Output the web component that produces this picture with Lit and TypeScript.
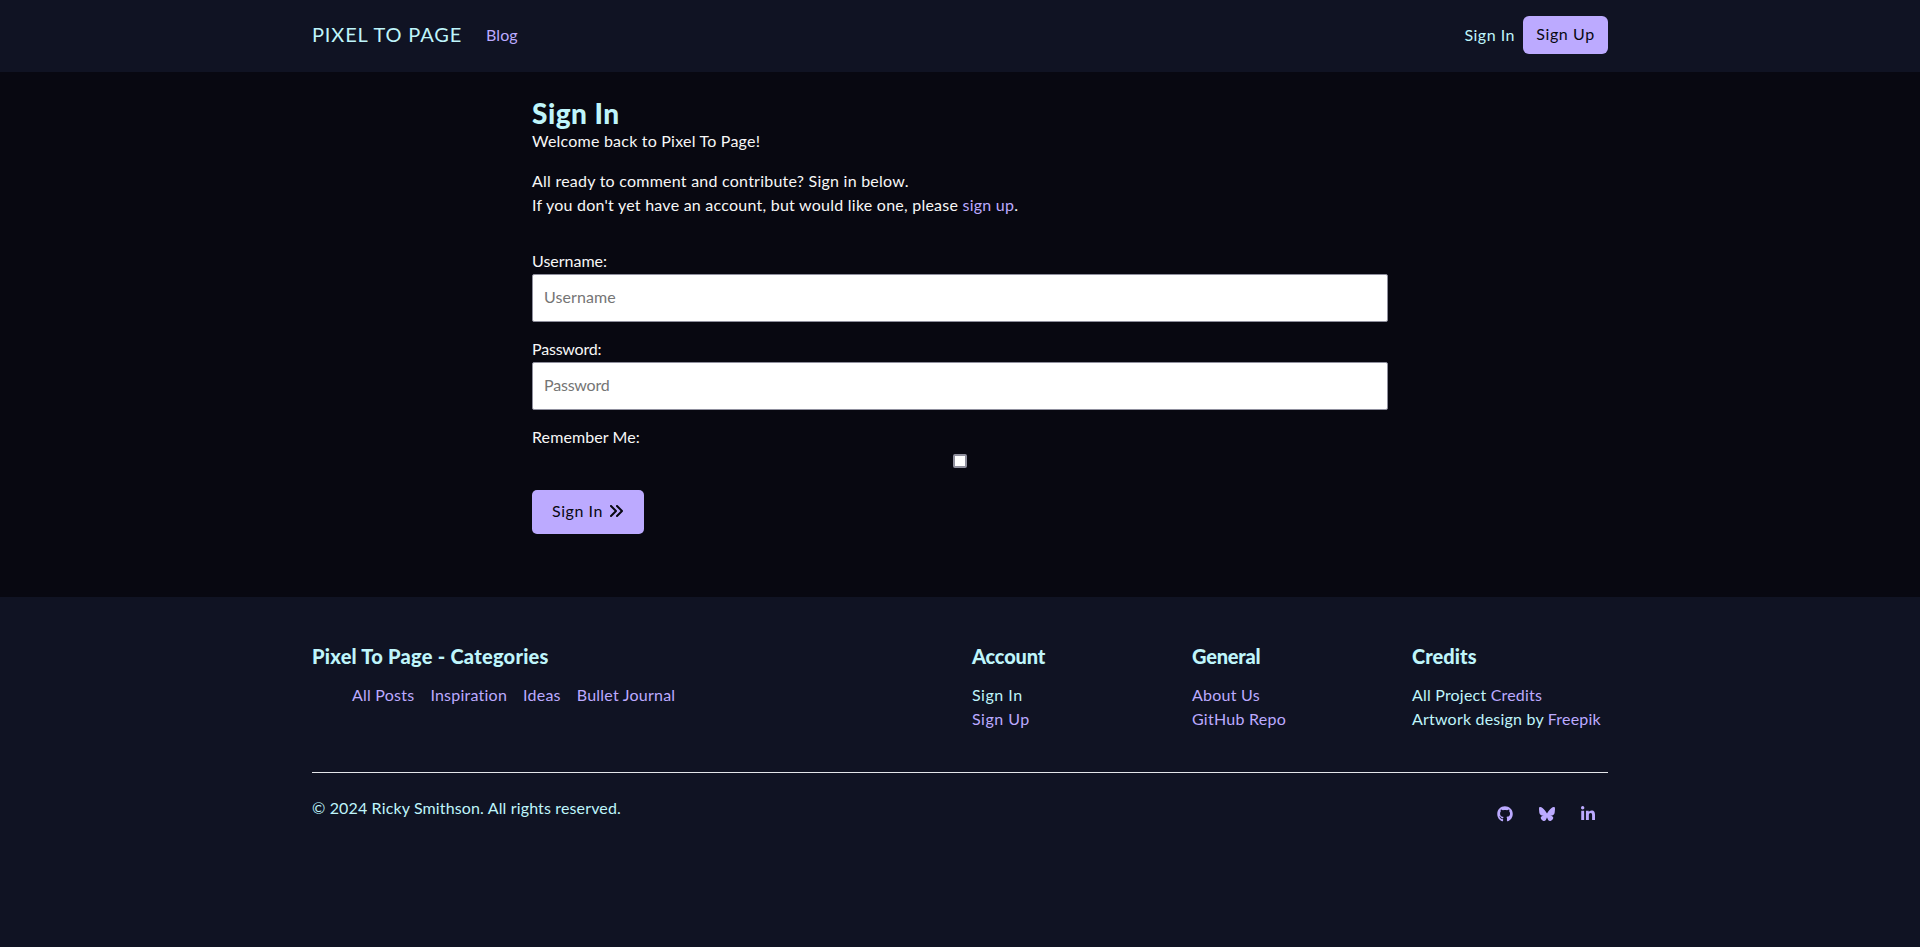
import { LitElement, html, css, svg } from "lit";
import { customElement } from "lit/decorators.js";

const github = svg`<svg class="ico github" viewBox="0 0 496 512"><path d="M165.9 397.4c0 2-2.3 3.6-5.2 3.6-3.3.3-5.6-1.3-5.6-3.6 0-2 2.3-3.6 5.2-3.6 3-.3 5.6 1.3 5.6 3.6zm-31.1-4.5c-.7 2 1.3 4.3 4.3 4.9 2.6 1 5.6 0 6.2-2s-1.3-4.3-4.3-5.2c-2.6-.7-5.5.3-6.2 2.3zm44.2-1.7c-2.9.7-4.9 2.6-4.6 4.9.3 2 2.9 3.3 5.9 2.6 2.9-.7 4.9-2.6 4.6-4.6-.3-1.9-3-3.2-5.9-2.900zM244.8 8C106.1 8 0 113.3 0 252c0 110.9 69.8 205.8 169.5 239.2 12.8 2.3 17.3-5.6 17.3-12.1 0-6.2-.3-40.4-.3-61.4 0 0-70 15-84.7-29.8 0 0-11.4-29.1-27.8-36.6 0 0-22.9-15.7 1.6-15.4 0 0 24.9 2 38.6 25.8 21.9 38.6 58.6 27.5 72.9 20.9 2.3-16 8.8-27.1 16-33.7-55.9-6.2-112.3-14.3-112.3-110.5 0-27.5 7.6-41.3 23.6-58.9-2.6-6.5-11.1-33.3 2.6-67.9 20.9-6.5 69 27 69 27 20-5.6 41.5-8.5 62.8-8.5s42.8 2.9 62.8 8.5c0 0 48.1-33.6 69-27 13.7 34.7 5.2 61.4 2.6 67.9 16 17.7 25.8 31.5 25.8 58.9 0 96.5-58.9 104.2-114.8 110.5 9.2 7.9 17 22.9 17 46.4 0 33.7-.3 75.4-.3 83.6 0 6.5 4.6 14.4 17.3 12.1C428.2 457.8 496 362.9 496 252 496 113.3 383.5 8 244.8 8z"/></svg>`;
const bluesky = svg`<svg class="ico bluesky" viewBox="0 0 512 512"><path d="M111.8 62.2C170.2 105.9 233 194.7 256 242.4c23-47.6 85.8-136.4 144.2-180.2C442.3 30.6 512 6.3 512 84c0 15.500-8.900 130.500-14.100 149.200-18.200 64.800-84.400 81.400-143.300 71.300C457.500 322 483.700 380 427.200 438c-107.400 110.200-154.300-27.600-166.300-62.900-1.700-4.900-2.600-7.800-3.300-7.800h-3.200c-.7 0-1.600 3-3.300 7.800-12 35.300-59 173.100-166.300 62.900C28.300 380 54.500 322 157.400 304.500 98.500 314.500 32.300 297.900 14.100 233.100 8.900 214.500 0 99.500 0 84 0 6.300 69.700 30.600 111.800 62.200z"/></svg>`;
const linkedin = svg`<svg class="ico linkedin" viewBox="0 0 448 512"><path d="M100.280 448H7.400V148.900h92.880zM53.790 108.100C24.090 108.100 0 83.500 0 53.800a53.790 53.790 0 0 1 107.580 0c0 29.700-24.100 54.300-53.790 54.300zM447.900 448h-92.680V302.400c0-34.700-.7-79.200-48.290-79.200-48.290 0-55.690 37.700-55.690 76.700V448h-92.780V148.900h89.080v40.800h1.300c12.400-23.500 42.690-48.300 87.880-48.300 94 0 111.280 61.900 111.280 142.300V448z"/></svg>`;
const chevrons = svg`<svg class="chevrons" viewBox="0 0 512 512"><path d="M470.600 278.600c12.500-12.500 12.500-32.800 0-45.300l-160-160c-12.500-12.500-32.800-12.500-45.300 0s-12.500 32.800 0 45.300L402.700 256 265.400 393.400c-12.500 12.500-12.500 32.800 0 45.300s32.800 12.500 45.300 0l160-160zm-352 160l160-160c12.500-12.500 12.500-32.800 0-45.300l-160-160c-12.500-12.500-32.800-12.500-45.300 0s-12.500 32.800 0 45.300L210.700 256 73.400 393.400c-12.500 12.500-12.500 32.800 0 45.300s32.800 12.500 45.300 0z"/></svg>`;

@customElement("app-root")
export class AppRoot extends LitElement {
  static styles = css`
    :host {
      display: flex; flex-direction: column; min-height: 100vh; box-sizing: border-box;
      background: #080811; color: #f7f7f7;
      font: 16px/24px Lato, "Open Sans", sans-serif; letter-spacing: 0.18px;
    }
    * { box-sizing: border-box; }
    h1, h2, p, ul { margin: 0; padding: 0; }
    a { color: #bcaaff; text-decoration: none; white-space: nowrap; }
    .wrap { width: 1296px; margin: 0 auto; }
    header { background: #101323; height: 72px; }
    nav { display: flex; align-items: center; height: 72px; padding-bottom: 2px; }
    .brand { color: #bff5fb; font-size: 20px; letter-spacing: 0.86px; width: 174px; padding-bottom: 3px; }
    .blog { letter-spacing: 0.1px; }
    .auth { margin-left: auto; display: flex; align-items: center; gap: 8px; }
    .mint { color: #bff5fb; }
    .sign-in { letter-spacing: 0.5px; }
    .sign-up {
      color: #080811; background: #bcaaff; border-radius: 6px; letter-spacing: 0.6px;
      width: 85px; height: 38px; line-height: 35px; text-align: center;
    }
    main { width: 856px; margin: 0 auto; height: 525px; padding-top: 26px; flex: none; }
    h1 { color: #bff5fb; font-size: 28px; line-height: 31px; font-weight: 900; letter-spacing: 0.5px; }
    .welcome { letter-spacing: 0.22px; }
    .intro { margin-top: 16px; letter-spacing: 0.24px; }
    .second { letter-spacing: 0.24px; }
    form { display: flex; flex-direction: column; margin-top: 32px; }
    label { display: block; height: 25px; letter-spacing: 0; }
    .pass { letter-spacing: -0.2px; }
    .remember { letter-spacing: 0.1px; }
    .input {
      width: 100%; height: 48px; margin: 0 0 15px; padding: 0 11px 4px;
      border: 1px solid #8f8f9d; border-radius: 2px; background: #fff;
      font: inherit; letter-spacing: 0.1px; color: #222;
    }
    .input.pass { letter-spacing: -0.2px; }
    .input::placeholder { color: #757575; opacity: 1; }
    .check {
      appearance: none; width: 14px; height: 14px; margin: 4px auto 0;
      border: 2px solid #8f8f9d; border-radius: 2px; background: #fff;
    }
    .submit {
      display: flex; align-items: center; margin-top: 22px; width: 112px; height: 44px;
      padding: 0 0 3px 20px; border: 0; border-radius: 5px; background: #bcaaff; color: #080811;
      font: inherit; letter-spacing: 0.55px; gap: 5px;
    }
    .chevrons { width: 16px; height: 16px; fill: currentColor; }
    footer { background: #101323; color: #bff5fb; flex: 1; padding-top: 47px; }
    .cols { display: grid; grid-template-columns: 660px 220px 220px 196px; height: 128px; align-content: start; }
    h2 { font-size: 20px; line-height: 24px; font-weight: 900; letter-spacing: 0.25px; margin-bottom: 15px; }
    .tight { letter-spacing: -0.2px; }
    .credits .tight { letter-spacing: 0.05px; }
    .credits p { white-space: nowrap; letter-spacing: 0.2px; }
    ul { list-style: none; display: flex; gap: 16px; padding-left: 40px; letter-spacing: 0.23px; }
    .stack { display: flex; flex-direction: column; align-items: start; letter-spacing: 0.25px; }
    .legal { border-top: 1px solid #e4e6ea; display: flex; justify-content: space-between; padding-top: 23px; letter-spacing: 0.14px; }
    .social { display: flex; gap: 26px; padding: 10px 13px 0 0; }
    .ico { height: 16px; fill: #bcaaff; display: block; }
    .github, .bluesky { width: 16px; }
    .linkedin { width: 14px; }
  `;

  render() {
    return html`
      <header>
        <nav class="wrap">
          <a class="brand">PIXEL TO PAGE</a>
          <a class="blog">Blog</a>
          <div class="auth"><a class="mint sign-in">Sign In</a><a class="sign-up">Sign Up</a></div>
        </nav>
      </header>
      <main>
        <h1>Sign In</h1>
        <p class="welcome">Welcome back to Pixel To Page!</p>
        <p class="intro">All ready to comment and contribute? Sign in below.</p>
        <p class="second">If you don't yet have an account, but would like one, please <a>sign up</a>.</p>
        <form>
          <label for="user">Username:</label>
          <input class="input" id="user" placeholder="Username" />
          <label class="pass" for="pass">Password:</label>
          <input class="input pass" id="pass" type="password" placeholder="Password" />
          <label class="remember" for="remember">Remember Me:</label>
          <input class="check" id="remember" type="checkbox" />
          <button class="submit" type="button">Sign In ${chevrons}</button>
        </form>
      </main>
      <footer>
        <div class="wrap">
          <div class="cols">
            <section>
              <h2>Pixel To Page - Categories</h2>
              <ul>
                ${["All Posts", "Inspiration", "Ideas", "Bullet Journal"].map((c) => html`<li><a>${c}</a></li>`)}
              </ul>
            </section>
            <section>
              <h2 class="tight">Account</h2>
              <div class="stack"><a class="mint sign-in">Sign In</a><a class="sign-in">Sign Up</a></div>
            </section>
            <section>
              <h2 class="tight">General</h2>
              <div class="stack"><a>About Us</a><a>GitHub Repo</a></div>
            </section>
            <section class="credits">
              <h2 class="tight">Credits</h2>
              <p>All Project <a>Credits</a></p>
              <p>Artwork design by <a>Freepik</a></p>
            </section>
          </div>
          <div class="legal">
            <p>© 2024 Ricky Smithson. All rights reserved.</p>
            <div class="social">${github}${bluesky}${linkedin}</div>
          </div>
        </div>
      </footer>
    `;
  }
}
